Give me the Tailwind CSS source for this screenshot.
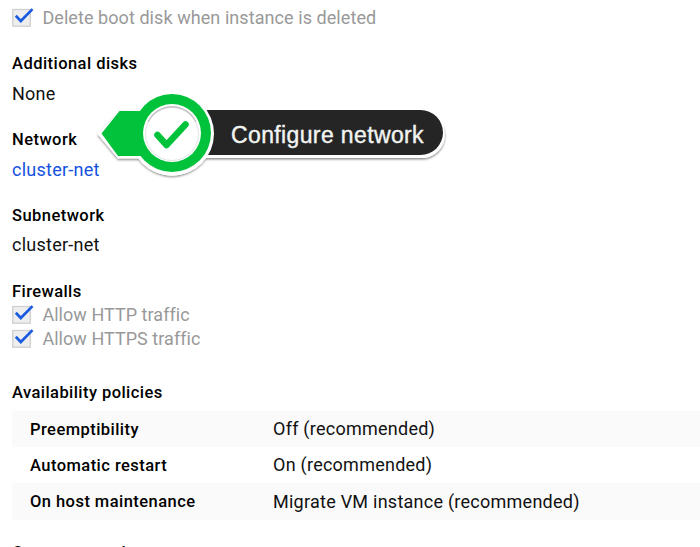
<!DOCTYPE html>
<html lang="en">
<head>
<meta charset="utf-8">
<title>VM instance details</title>
<script src="https://cdn.jsdelivr.net/npm/@tailwindcss/browser@4"></script>
</head>
<body class="relative h-[547px] w-[700px] overflow-hidden bg-white pl-3 font-['Roboto',sans-serif] text-[18px] text-[#111]">
<svg class="hidden">
  <symbol id="check" viewBox="0 0 22 20">
    <rect x=".75" y="1.5" width="17.5" height="16.7" fill="#eeeeee" stroke="#cfcfcf" stroke-width="1.3"/>
    <path d="M3.800 7.800 8.800 13 20.500 1.100" fill="none" stroke="#1a5ae0" stroke-width="2.7"/>
  </symbol>
</svg>
<main class="flex flex-col whitespace-nowrap">
  <div class="flex h-12 items-start pt-[6px] leading-6 tracking-[.07px] text-[#999]"><svg class="mt-[2px] mr-[8.4px] h-5 w-[22px]"><use href="#check"/></svg><span>Delete boot disk when instance is deleted</span></div>
  <dl class="flex flex-col gap-4">
    <div class="h-[60px] leading-[30px]"><dt class="pt-px text-[16.5px] font-medium tracking-[.45px] text-black">Additional disks</dt><dd class="tracking-[.25px]">None</dd></div>
    <div class="h-[60px] leading-[30px]"><dt class="pt-px text-[16.5px] font-medium tracking-[.45px] text-black">Network</dt><dd class="tracking-[.25px]"><a class="text-[#1552e0]">cluster-net</a></dd></div>
    <div class="h-[60px] leading-[30px]"><dt class="h-[30px] pt-px text-[16.5px] font-medium tracking-[.45px] text-black">Subnetwork</dt><dd class="tracking-[.25px]">cluster-net</dd></div>
  </dl>
  <section class="mt-4 h-[102px]">
    <h2 class="h-[27px] pt-px text-[16.5px] leading-[30px] font-medium tracking-[.42px] text-black">Firewalls</h2>
    <div class="flex h-6 leading-6 tracking-[.04px] text-[#999]"><svg class="mt-[2px] mr-[8.4px] h-5 w-[22px]"><use href="#check"/></svg>Allow HTTP traffic</div>
    <div class="flex h-6 leading-6 tracking-[.04px] text-[#999]"><svg class="mt-[2px] mr-[8.4px] h-5 w-[22px]"><use href="#check"/></svg>Allow HTTPS traffic</div>
  </section>
  <section>
    <h2 class="h-[33px] text-[16.5px] leading-[30px] font-medium tracking-[.43px] text-black">Availability policies</h2>
    <div class="flex h-9 items-center bg-[#fafafa] pl-[18px]"><span class="w-[243px] pt-[2px] text-[16.5px] font-medium tracking-[.45px] text-black">Preemptibility</span><span class="pb-[2px] tracking-[.25px]">Off (recommended)</span></div>
    <div class="flex h-[36px] items-center pl-[18px]"><span class="w-[243px] pt-[2px] text-[16.5px] font-medium tracking-[.45px] text-black">Automatic restart</span><span class="pb-[2px] tracking-[.25px]">On (recommended)</span></div>
    <div class="flex h-[37px] items-center bg-[#fafafa] pl-[18px]"><span class="w-[243px] pt-[2px] text-[16.5px] font-medium tracking-[.45px] text-black">On host maintenance</span><span class="tracking-[.25px]">Migrate VM instance (recommended)</span></div>
  </section>
  <h2 class="mt-[19px] text-[16.5px] leading-[30px] font-medium tracking-[.45px] text-black"><span class="relative -top-px">Custom metadata</span></h2>
</main>
<div class="absolute top-[84px] left-[90px] h-[100px] w-[370px]">
  <svg class="absolute inset-0" width="370" height="100" viewBox="90 84 370 100">
    <defs><filter id="s" x="-10%" y="-20%" width="120%" height="140%"><feDropShadow dx="0" dy="1.3" stdDeviation=".8" flood-color="#000" flood-opacity=".5"/></filter></defs>
    <g filter="url(#s)" fill="#fff">
      <path d="M190 113H421A22.500 22.500 0 0 0 443 126A23 23 0 0 1 421 158H190Z"/>
      <path d="M97.500 134 118 158.500H142L150 111H119.500Z"/>
      <circle cx="172" cy="134" r="41.500"/>
    </g>
    <path d="M110 84H160L134 108H118L98 132H90V84Z" fill="#fff"/>
    <path d="M128 84H208V112C198 90 146 90 136 112Z" fill="#fff"/>
    <path d="M180 110H420.500A22.500 22.500 0 0 1 420.500 155H180Z" fill="#252525"/>
    <circle cx="172" cy="133.800" r="42" fill="#fff"/>
    <path d="M101.500 133.500 119.500 111H150V156H118Z" fill="#00c23b"/>
    <circle cx="172" cy="133" r="39" fill="#00c23b"/>
    <circle cx="172" cy="133" r="29" fill="#fff"/>
    <circle cx="172" cy="134" r="26.500" fill="#fff" stroke="#e2e2e2" stroke-width="1"/>
    <path d="M148 122A26.500 26.500 0 0 1 196 122" fill="none" stroke="#c4c4c4" stroke-width="1.300"/>
    <path d="M157.500 135 166.500 145 185.500 124.500" fill="none" stroke="#00c23b" stroke-width="6.500" stroke-linecap="round" stroke-linejoin="round"/>
  </svg>
  <span class="absolute top-[37px] left-[141px] whitespace-nowrap font-['Liberation_Sans',sans-serif] text-[23px] leading-7 tracking-[.37px] text-[#f2f4f2] [-webkit-text-stroke:.4px_#f2f4f2]">Configure network</span>
</div>
</body>
</html>
